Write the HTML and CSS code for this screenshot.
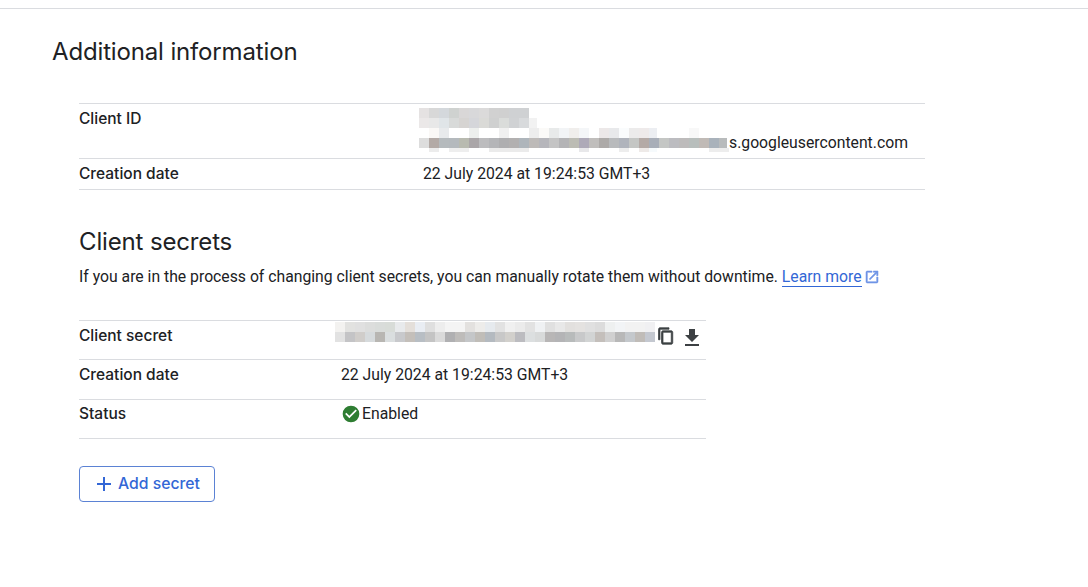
FILE: index.html
```html
<!DOCTYPE html>
<html lang="en">
<head>
<meta charset="utf-8">
<title>Additional information</title>
<link rel="stylesheet" href="styles.css">
</head>
<body>
<div class="page">
  <h1 class="page-title">Additional information</h1>
  <section class="content">
    <div class="info-table wide">
      <div class="row row-id">
        <div class="label">Client ID</div>
        <div class="value value-id">
          <svg class="mosaic mosaic-id" width="310" height="50" viewBox="0 0 310 50" aria-hidden="true">
            <g>
              <rect x="0" y="0" width="10" height="10" fill="#e5e2e2"/><rect x="10" y="0" width="10" height="10" fill="#d8d8d8"/><rect x="20" y="0" width="10" height="10" fill="#d4d8dc"/><rect x="30" y="0" width="10" height="10" fill="#cfd2d0"/><rect x="40" y="0" width="10" height="10" fill="#d9d7d7"/><rect x="50" y="0" width="10" height="10" fill="#d8d8da"/><rect x="60" y="0" width="10" height="10" fill="#dbdada"/><rect x="70" y="0" width="10" height="10" fill="#d1d1d1"/><rect x="80" y="0" width="10" height="10" fill="#d0d0d0"/><rect x="90" y="0" width="20" height="10" fill="#cfd1d3"/>
              <rect x="0" y="10" width="10" height="10" fill="#ebe8e8"/><rect x="10" y="10" width="10" height="10" fill="#e8e8e8"/><rect x="20" y="10" width="10" height="10" fill="#e0e5e8"/><rect x="30" y="10" width="10" height="10" fill="#d8dad9"/><rect x="40" y="10" width="10" height="10" fill="#d6d4d2"/><rect x="50" y="10" width="10" height="10" fill="#d5d6da"/><rect x="60" y="10" width="10" height="10" fill="#dadad7"/><rect x="70" y="10" width="10" height="10" fill="#cfd0d0"/><rect x="80" y="10" width="10" height="10" fill="#dadcda"/><rect x="90" y="10" width="10" height="10" fill="#d0d2d4"/><rect x="100" y="10" width="10" height="10" fill="#d8dadc"/><rect x="110" y="10" width="8" height="10" fill="#f2f2f2"/>
              <rect x="10" y="20" width="10" height="10" fill="#faf8f6"/><rect x="20" y="20" width="10" height="10" fill="#e8eaec"/><rect x="50" y="20" width="10" height="10" fill="#edefed"/><rect x="80" y="20" width="10" height="10" fill="#f0f0f0"/><rect x="110" y="20" width="10" height="10" fill="#ededed"/><rect x="120" y="20" width="10" height="10" fill="#fbfaf8"/><rect x="130" y="20" width="10" height="10" fill="#e8eaea"/><rect x="140" y="20" width="10" height="10" fill="#f2f4f6"/><rect x="150" y="20" width="10" height="10" fill="#f0eeec"/><rect x="160" y="20" width="10" height="10" fill="#f4f6f8"/><rect x="180" y="20" width="10" height="10" fill="#ece8e8"/><rect x="190" y="20" width="10" height="10" fill="#e8e9eb"/><rect x="200" y="20" width="10" height="10" fill="#fafcfd"/><rect x="210" y="20" width="10" height="10" fill="#ecebeb"/><rect x="220" y="20" width="10" height="10" fill="#eeeaea"/><rect x="230" y="20" width="8" height="10" fill="#eceef2"/><rect x="270" y="20" width="10" height="10" fill="#f8f8f8"/>
              <rect x="0" y="30" width="10" height="10" fill="#dddddd"/><rect x="10" y="30" width="10" height="10" fill="#b3aaa6"/><rect x="20" y="30" width="10" height="10" fill="#b5babd"/><rect x="30" y="30" width="10" height="10" fill="#b4b9bd"/><rect x="40" y="30" width="10" height="10" fill="#b8bab0"/><rect x="50" y="30" width="10" height="10" fill="#aaa6a8"/><rect x="60" y="30" width="10" height="10" fill="#bcbcbe"/><rect x="70" y="30" width="10" height="10" fill="#b4b5b8"/><rect x="80" y="30" width="10" height="10" fill="#aeaeb0"/><rect x="90" y="30" width="10" height="10" fill="#b2b0b0"/><rect x="100" y="30" width="10" height="10" fill="#aeb5bb"/><rect x="110" y="30" width="10" height="10" fill="#bdbab8"/><rect x="120" y="30" width="10" height="10" fill="#b6b6bb"/><rect x="130" y="30" width="10" height="10" fill="#c4c4c4"/><rect x="140" y="30" width="10" height="10" fill="#b4b4b6"/><rect x="150" y="30" width="10" height="10" fill="#bcbcb4"/><rect x="160" y="30" width="10" height="10" fill="#aeaab8"/><rect x="170" y="30" width="10" height="10" fill="#c0bebc"/><rect x="180" y="30" width="10" height="10" fill="#adaaa8"/><rect x="190" y="30" width="10" height="10" fill="#b8babc"/><rect x="200" y="30" width="10" height="10" fill="#b0b4bc"/><rect x="210" y="30" width="10" height="10" fill="#c4c6c4"/><rect x="220" y="30" width="10" height="10" fill="#b4aaa6"/><rect x="230" y="30" width="10" height="10" fill="#a8aeb8"/><rect x="240" y="30" width="10" height="10" fill="#c4c6c4"/><rect x="250" y="30" width="10" height="10" fill="#bcbcc0"/><rect x="260" y="30" width="10" height="10" fill="#bdbbbb"/><rect x="270" y="30" width="10" height="10" fill="#b8bebc"/><rect x="280" y="30" width="10" height="10" fill="#c0bab6"/><rect x="290" y="30" width="10" height="10" fill="#a9b2bb"/><rect x="300" y="30" width="8" height="10" fill="#b8bbbc"/>
              <rect x="10" y="40" width="10" height="4" fill="#ececec"/><rect x="30" y="40" width="20" height="4" fill="#eeeeee"/><rect x="70" y="40" width="40" height="4" fill="#ebebeb"/><rect x="160" y="40" width="10" height="4" fill="#e8e8ea"/><rect x="200" y="40" width="10" height="4" fill="#ededed"/><rect x="220" y="40" width="10" height="4" fill="#eeeae8"/><rect x="230" y="40" width="8" height="4" fill="#f6fafc"/><rect x="290" y="40" width="20" height="4" fill="#ededed"/>
            </g>
          </svg>
          <span class="id-suffix">s.googleusercontent.com</span>
        </div>
      </div>
      <div class="row row-short">
        <div class="label">Creation date</div>
        <div class="value">22 July 2024 at 19:24:53 GMT+3</div>
      </div>
    </div>

    <h2 class="section-title">Client secrets</h2>
    <p class="section-desc">If you are in the process of changing client secrets, you can manually rotate them without downtime. <a class="learn-more" href="#">Learn more</a><svg class="ext-icon" width="16" height="16" viewBox="0 0 24 24" aria-hidden="true"><path d="M19 19H5V5h7V3H5a2 2 0 0 0-2 2v14a2 2 0 0 0 2 2h14a2 2 0 0 0 2-2v-7h-2v7zM14 3v2h3.59l-9.83 9.83 1.41 1.41L19 6.41V10h2V3h-7z"/></svg></p>

    <div class="info-table narrow">
      <div class="row row-secret">
        <div class="label">Client secret</div>
        <div class="value value-secret">
          <svg class="mosaic mosaic-secret" width="320" height="20" viewBox="0 0 320 20" aria-hidden="true">
            <rect x="0" y="0" width="10" height="10" fill="#f3f2f0"/><rect x="10" y="0" width="10" height="10" fill="#e2e2e0"/><rect x="20" y="0" width="10" height="10" fill="#e0e0e0"/><rect x="30" y="0" width="10" height="10" fill="#dcdddc"/><rect x="40" y="0" width="10" height="10" fill="#d9dcda"/><rect x="50" y="0" width="10" height="10" fill="#d8dcd8"/><rect x="60" y="0" width="10" height="10" fill="#e8eaec"/><rect x="70" y="0" width="10" height="10" fill="#e4dfda"/><rect x="80" y="0" width="10" height="10" fill="#e9edf3"/><rect x="90" y="0" width="10" height="10" fill="#dfdfdf"/><rect x="100" y="0" width="10" height="10" fill="#ededed"/><rect x="110" y="0" width="20" height="10" fill="#f4f4f4"/><rect x="130" y="0" width="10" height="10" fill="#e3e1df"/><rect x="140" y="0" width="10" height="10" fill="#edecea"/><rect x="150" y="0" width="10" height="10" fill="#e6eaee"/><rect x="160" y="0" width="10" height="10" fill="#e2e2e2"/><rect x="170" y="0" width="10" height="10" fill="#f0f0f0"/><rect x="180" y="0" width="10" height="10" fill="#ebebeb"/><rect x="190" y="0" width="10" height="10" fill="#e2e2e2"/><rect x="200" y="0" width="10" height="10" fill="#eff1f3"/><rect x="210" y="0" width="10" height="10" fill="#e0e0e0"/><rect x="220" y="0" width="10" height="10" fill="#e8e8e8"/><rect x="230" y="0" width="10" height="10" fill="#e2e0de"/><rect x="240" y="0" width="10" height="10" fill="#e4e2e0"/><rect x="250" y="0" width="10" height="10" fill="#e0e0e0"/><rect x="260" y="0" width="10" height="10" fill="#dcdcdc"/><rect x="270" y="0" width="10" height="10" fill="#eef0f0"/><rect x="280" y="0" width="10" height="10" fill="#f2f4f6"/><rect x="290" y="0" width="20" height="10" fill="#f2f2f2"/><rect x="310" y="0" width="10" height="10" fill="#f0f0f2"/>
            <rect x="0" y="10" width="10" height="10" fill="#e2e2e2"/><rect x="10" y="10" width="10" height="10" fill="#c4c4c6"/><rect x="20" y="10" width="10" height="10" fill="#d0cdca"/><rect x="30" y="10" width="10" height="10" fill="#d6dadc"/><rect x="40" y="10" width="10" height="10" fill="#b8b6b2"/><rect x="50" y="10" width="10" height="10" fill="#dadedf"/><rect x="60" y="10" width="10" height="10" fill="#c8c9cc"/><rect x="70" y="10" width="10" height="10" fill="#c4bfba"/><rect x="80" y="10" width="10" height="10" fill="#b8bec4"/><rect x="90" y="10" width="10" height="10" fill="#c4c4c4"/><rect x="100" y="10" width="10" height="10" fill="#dadada"/><rect x="110" y="10" width="10" height="10" fill="#b0b0b2"/><rect x="120" y="10" width="10" height="10" fill="#bebcba"/><rect x="130" y="10" width="10" height="10" fill="#c4c6c8"/><rect x="140" y="10" width="10" height="10" fill="#c0bdb8"/><rect x="150" y="10" width="10" height="10" fill="#b4bac0"/><rect x="160" y="10" width="10" height="10" fill="#c8c8c8"/><rect x="170" y="10" width="10" height="10" fill="#d2d0cc"/><rect x="180" y="10" width="10" height="10" fill="#bcbcc0"/><rect x="190" y="10" width="10" height="10" fill="#dcdfe0"/><rect x="200" y="10" width="10" height="10" fill="#d8dada"/><rect x="210" y="10" width="10" height="10" fill="#b8b6b6"/><rect x="220" y="10" width="10" height="10" fill="#b4b4b6"/><rect x="230" y="10" width="10" height="10" fill="#b8bbbb"/><rect x="240" y="10" width="10" height="10" fill="#c8c9ca"/><rect x="250" y="10" width="10" height="10" fill="#d2d4d4"/><rect x="260" y="10" width="10" height="10" fill="#c4bfbb"/><rect x="270" y="10" width="10" height="10" fill="#d0d0d0"/><rect x="280" y="10" width="10" height="10" fill="#b8b8b8"/><rect x="290" y="10" width="10" height="10" fill="#c4c8cc"/><rect x="300" y="10" width="10" height="10" fill="#c0bcb8"/><rect x="310" y="10" width="10" height="10" fill="#c4c8d0"/>
          </svg>
          <svg class="icon-copy" width="18" height="18" viewBox="0 0 24 24" aria-hidden="true"><path d="M16 1H4c-1.1 0-2 .9-2 2v14h2V3h12V1zm3 4H8c-1.1 0-2 .9-2 2v14c0 1.1.9 2 2 2h11c1.1 0 2-.9 2-2V7c0-1.1-.9-2-2-2zm0 16H8V7h11v14z"/></svg>
          <svg class="icon-download" width="24" height="24" viewBox="0 0 24 24" aria-hidden="true"><path d="M19 9h-4V3H9v6H5l7 7 7-7zM5 18v2h14v-2H5z"/></svg>
        </div>
      </div>
      <div class="row row-date">
        <div class="label">Creation date</div>
        <div class="value">22 July 2024 at 19:24:53 GMT+3</div>
      </div>
      <div class="row row-status">
        <div class="label">Status</div>
        <div class="value value-status">
          <svg class="icon-check" width="20" height="20" viewBox="0 0 24 24" aria-hidden="true"><path d="M12 2a10 10 0 1 0 0 20 10 10 0 0 0 0-20zm-2 15-5-5 1.41-1.41L10 14.17l7.59-7.59L19 8l-9 9z"/></svg>
          <span>Enabled</span>
        </div>
      </div>
    </div>

    <button class="add-btn" type="button">
      <svg width="18" height="18" viewBox="0 0 18 18" aria-hidden="true"><path d="M8 2h2v6h6v2h-6v6H8v-6H2V8h6z"/></svg>
      <span class="add-label">Add secret</span>
    </button>
  </section>
</div>
</body>
</html>
```

FILE: styles.css
```css
* { box-sizing: border-box; }
html, body { margin: 0; padding: 0; background: #fff; }
body {
  height: 587px;
  overflow: hidden;
  padding-top: 8px;
  font-family: Roboto, "Liberation Sans", sans-serif;
  font-size: 15.75px;
  color: #202124;
}
.page {
  border-top: 1px solid #dadce0;
  padding: 28px 0 0 53px;
}
.page-title {
  margin: 0 0 0 -1px;
  font-family: Inter, sans-serif;
  font-size: 24px;
  line-height: 30px;
  font-weight: 400;
  letter-spacing: -0.15px;
}
.content {
  padding: 36px 0 0 26px;
}
.info-table.wide { width: 846px; border-bottom: 1px solid #dadce0; }
.info-table.narrow { width: 627px; border-bottom: 1px solid #dadce0; }
.row {
  display: flex;
  border-top: 1px solid #dadce0;
  line-height: 20px;
}
.label {
  font-family: Inter, sans-serif;
  font-size: 15.5px;
  font-weight: 500;
  flex: none;
}
.wide .label { width: 344px; }
.narrow .label { width: 262px; }
.row-id { height: 55px; padding-top: 5px; }
.row-short { height: 31px; padding-top: 5px; }
.row-secret { height: 39px; padding-top: 5px; }
.row-date { height: 40px; padding-top: 5px; }
.row-status { height: 39px; padding-top: 4px; }
.value { position: relative; }
.value-id { flex: 1; padding-top: 24px; }
.mosaic { position: absolute; display: block; }
.mosaic-id { left: -4px; top: -1px; }
.id-suffix { display: block; padding-left: 306px; }
.value-secret { display: flex; align-items: center; width: 365px; }
.mosaic-secret { left: -6px; top: -4px; }
.icon-copy { position: absolute; left: 316px; top: 1px; fill: #3c4043; stroke: #3c4043; stroke-width: 1; }
.icon-download { position: absolute; left: 339px; top: 0; fill: #3c4043; }
.value-status { display: flex; align-items: flex-start; gap: 1px; }
.icon-check { fill: #2e7d32; }
.section-title {
  margin: 37px 0 0;
  font-family: Inter, sans-serif;
  font-size: 24px;
  line-height: 30px;
  font-weight: 400;
  letter-spacing: -0.15px;
}
.section-desc {
  margin: 9px 0 0;
  line-height: 22px;
  white-space: nowrap;
}
.learn-more {
  color: #3367d6;
  text-decoration: none;
  border-bottom: 1px solid #3367d6;
}
.ext-icon { fill: #6f95e6; stroke: #6f95e6; stroke-width: 0.8; vertical-align: -3px; margin-left: 2px; }
.narrow { margin-top: 32px; }
.add-btn {
  display: flex;
  align-items: center;
  gap: 5px;
  margin-top: 27px;
  width: 136px;
  height: 36px;
  padding: 0 0 0 15px;
  background: #fff;
  border: 1px solid #5b82d4;
  border-radius: 4px;
  color: #3367d6;
  font-family: Inter, sans-serif;
  font-size: 15.75px;
  font-weight: 500;
}
.add-label { padding-bottom: 2px; }
.add-btn svg { fill: #3367d6; }
```
